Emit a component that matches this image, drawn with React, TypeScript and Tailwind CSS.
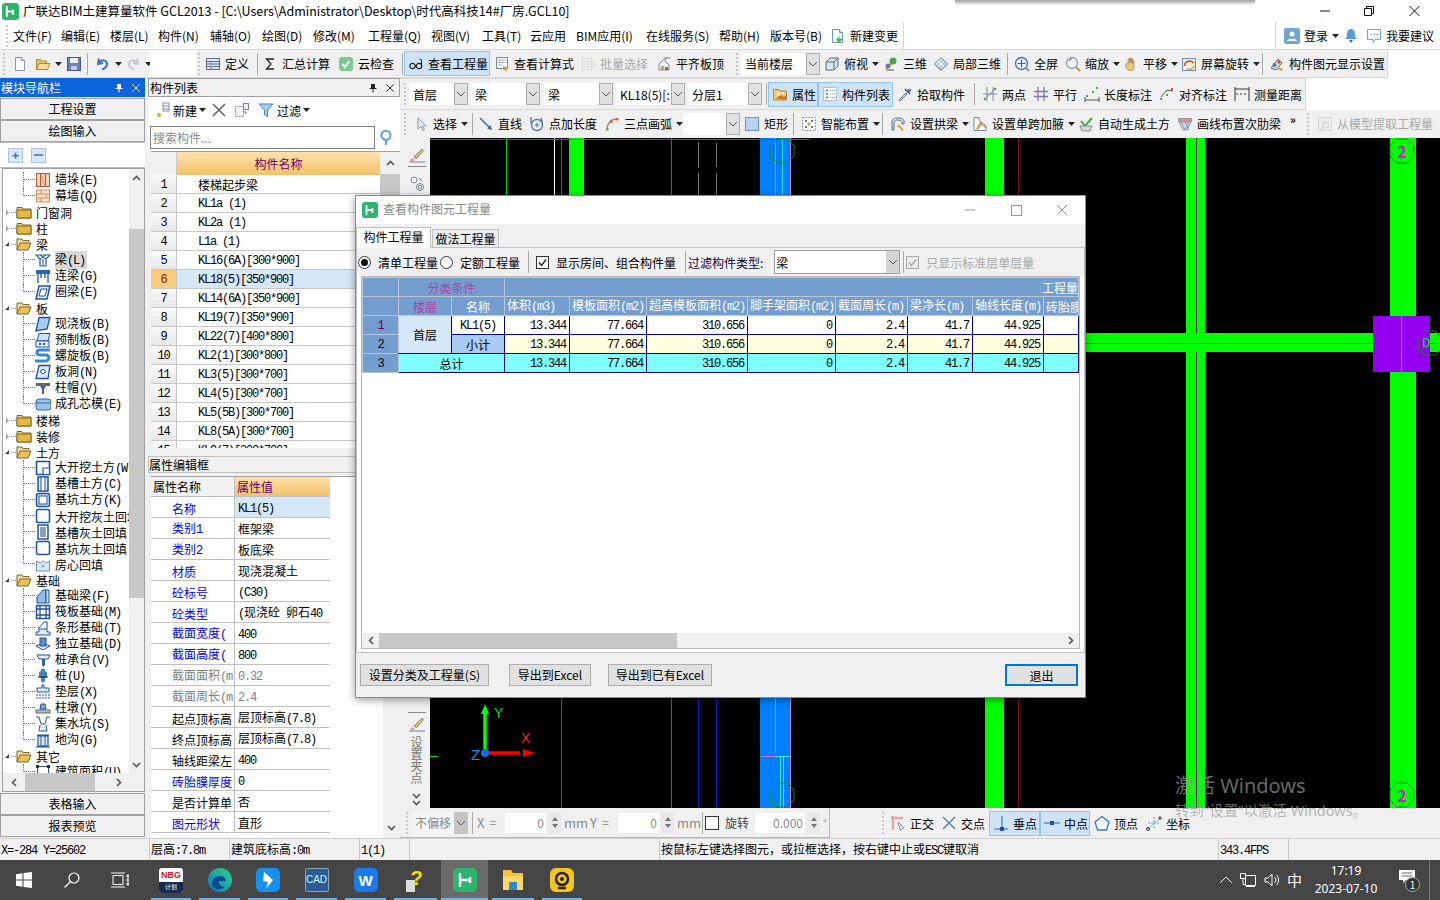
import type { ReactNode } from "react";
import clsx from "clsx";

const mono = "font-['Liberation_Mono',monospace] text-[12px] tracking-[-1.2px]";

// latin runs get narrow mono so they take half the width of a CJK char, like SimSun
function Sim({ t }: { t: string }) {
  const parts = t.split(/([ -~]+)/).filter(Boolean);
  return (
    <span>
      {parts.map((p, i) =>
        /^[ -~]+$/.test(p) ? (
          <span key={i} className={mono}>{p}</span>
        ) : (
          <span key={i}>{p}</span>
        )
      )}
    </span>
  );
}

const icons: Record<string, ReactNode> = {
  file: <><path d="M3.5 1.5h6l3 3v10h-9z" fill="#fff" stroke="#8a96a8" /><path d="M9.5 1.5v3h3" fill="#dfe4ee" stroke="#8a96a8" /></>,
  open: <><path d="M1.5 13.5v-10h4l1 1.500h5v2" fill="#e8c468" stroke="#a9853a" /><path d="M1.5 13.5l2.5-6h11l-2.5 6z" fill="#f7dd93" stroke="#a9853a" /></>,
  save: <><rect x="1.5" y="1.500" width="13" height="13" fill="#6d7fb5" stroke="#46568c" /><rect x="4" y="2" width="8" height="5" fill="#eef1f8" /><rect x="5" y="10" width="6" height="4" fill="#c3cbe0" /></>,
  undo: <path d="M4 2.500 3 8l5-1M3.500 7.500C6 3 12 3.500 12 8c0 3-2.500 4.500-5 5.500" fill="none" stroke="#3a76c8" strokeWidth="2" />,
  redo: <path d="M12 2.500 13 8l-5-1M12.500 7.500C10 3 4 3.500 4 8c0 3 2.500 4.500 5 5.500" fill="none" stroke="#c4c8cf" strokeWidth="2" />,
  define: <><rect x="1.500" y="2.500" width="13" height="11" fill="#dbe6f6" stroke="#5b6f90" /><path d="M1.500 5.500h13M6 5.500v8M2 8h3M2 10.500h3M7 8h7M7 10.500h7" stroke="#5b6f90" /></>,
  sigma: <path d="M12 3H4.500L9 8l-4.500 5H12" fill="none" stroke="#222" strokeWidth="1.300" />,
  cloud: <><rect x="1" y="1" width="14" height="14" rx="3" fill="#7ccb8d" /><path d="m4.500 8 2.500 3 4.500-6" fill="none" stroke="#fff" strokeWidth="2" /></>,
  glasses: <><circle cx="4.500" cy="10" r="2.700" fill="none" stroke="#222" strokeWidth="1.200" /><circle cx="11" cy="10" r="2.700" fill="none" stroke="#222" strokeWidth="1.200" /><path d="M7 9.500h1.500M13.500 9V4l-2-1" fill="none" stroke="#222" /></>,
  calc: <><rect x="2.500" y="1.500" width="11" height="11" fill="#fff" stroke="#7c8798" /><path d="M4.500 4h7M4.500 6.500h7M4.500 9h4" stroke="#6b88b4" strokeDasharray="2 1" /><path d="m9 10 5 2-2 1 1 2-1.500.5-1-2-1.500 1z" fill="#d89a2a" /></>,
  newchg: <><path d="M2.500 1.500h7l3 3v10h-10z" fill="#fff" stroke="#6a9ac8" /><path d="M9.500 1.500v3h3" fill="#d6e6f6" stroke="#6a9ac8" /><path d="M9 8v3M6.500 11h5L9 15z" fill="#4caf50" stroke="#4caf50" /></>,
  batch: <><rect x="2.500" y="2.500" width="9" height="11" fill="#f1f1f1" stroke="#c0c0c0" /><path d="M4 5h6M4 8h6M4 11h6M12 6l3 3-3 3" fill="none" stroke="#bcbcbc" /></>,
  align: <><path d="M3 14V8l6-6v3l4 4v5z" fill="#e9edf4" stroke="#7a8aa6" /><rect x="5" y="10" width="3" height="4" fill="#d8a13a" /><rect x="9" y="11" width="3" height="3" fill="#d84a2a" /><path d="M9 2h5" stroke="#777" /></>,
  topview: <><path d="M2 6l4-4h8v8l-4 4H2z" fill="#d9e7f7" stroke="#567" /><path d="M2 6h8v8M10 6l4-4" fill="none" stroke="#567" /></>,
  tree3d: <><path d="M3 13 8 8l4-5" stroke="#d0a030" strokeWidth="2" /><circle cx="10" cy="5" r="3.500" fill="#4ca34c" /><circle cx="5" cy="10" r="2.500" fill="#5a80b8" /><path d="M3 14h8" stroke="#888" strokeWidth="1.500" /></>,
  local3d: <><path d="M8 1.500 14.500 8 8 14.500 1.500 8z" fill="#bdd2ea" stroke="#5a7a9c" /><path d="m5 5 6 6M8 2.500 3 8M11 5l-5 5" stroke="#fff" /></>,
  zoomfull: <><circle cx="7.500" cy="7.500" r="6" fill="#e4ecf8" stroke="#4f6f9f" strokeWidth="1.300" /><path d="M7.500 3.500v8M3.500 7.500h8" stroke="#3a5a90" /><path d="m12 12 3 3" stroke="#8895ad" strokeWidth="2" /></>,
  zoom: <><circle cx="7" cy="7" r="5.500" fill="#eef3fb" stroke="#8a9ab5" strokeWidth="1.300" /><path d="m11 11 4 4" stroke="#b89a50" strokeWidth="2.200" /><path d="M4 5a3.500 3.500 0 0 1 3-2" stroke="#5a7ab0" fill="none" /></>,
  pan: <path d="M4 13c-2-3-2-5-1-5.500s2 1 2 1V3.500c0-1 1.500-1 1.500 0V7 2.500c0-1 1.500-1 1.500 0V7V3c0-1 1.500-1 1.500 0v5 -3c0-1 1.500-1 1.500 0v6c0 2-1 3-2 3.500H6z" fill="#e8c878" stroke="#96824f" strokeWidth=".7" />,
  rotate: <><rect x="1.500" y="2.500" width="13" height="12" fill="#f5f2d5" stroke="#6b8fc0" /><path d="M3.500 10a5 5 0 0 1 9-3" fill="none" stroke="#e0402a" strokeWidth="1.500" /><path d="M13 10a5 5 0 0 1-7 3" fill="none" stroke="#e0a02a" strokeWidth="1.500" /></>,
  display: <><path d="M2 12 9 3l4 4-6 7z" fill="#d9d6c2" stroke="#666" /><circle cx="5.500" cy="9" r="2" fill="#4a7fc0" /><path d="m9 11 5 2-1 2-5-2z" fill="#c9a24a" /><circle cx="10" cy="6" r="1.500" fill="#c04040" /></>,
  attr: <><path d="M1.500 14V3.500h5l1 1.500h7v9z" fill="#f2cd78" stroke="#aa8438" /><path d="M4 12.500 9 8l3 3 2-2v4.500z" fill="#c97920" /><path d="M5 7h7M5 9h4" stroke="#fff" /></>,
  list: <><rect x="1.500" y="1.500" width="13" height="13" fill="#fff" stroke="#93a9c6" strokeDasharray="2 1" /><path d="M4 4.500h2M4 8h2M4 11.500h2" stroke="#3c70b0" strokeWidth="1.500" /><path d="M8 4.500h5M8 8h5M8 11.500h5" stroke="#8aa" strokeDasharray="1 1" /></>,
  pick: <><path d="M9 7 3 13l-1 2 2-1 6-6z" fill="#dfeaf6" stroke="#5c7ba3" /><path d="m9 4 3 3 2-2c1-1-.5-3-2-2z" fill="#5a7faa" /><path d="m8 3 5 5" stroke="#39577f" strokeWidth="1.500" /></>,
  twopoint: <><path d="M5 1v14M11 1v14M1 8h14" stroke="#7f88b0" /><path d="M2 14 14 2" stroke="#d86a55" /><circle cx="3" cy="13" r="1.300" fill="#55a055" /><circle cx="13" cy="3" r="1.300" fill="#55a055" /></>,
  parallel: <path d="M5 1v14M11 1v14M1 5.500h14M1 10.500h14" stroke="#7f78a8" strokeWidth="1.300" />,
  lenmark: <><path d="M1 14h14M1 11v5M15 11v5" stroke="#555" /><rect x="12" y="1" width="2" height="2" fill="#52a552" /><rect x="8" y="5" width="2" height="2" fill="#52a552" /><rect x="2" y="9" width="2" height="2" fill="#52a552" /></>,
  alignmark: <><path d="m2 11 6-7 6 1" fill="none" stroke="#555" /><rect x="1" y="12" width="2" height="2" fill="#52a552" /><rect x="7" y="8" width="2" height="2" fill="#52a552" /><rect x="12" y="2" width="2" height="2" fill="#d25a3a" /></>,
  measure: <path d="M1 1v14M15 1v14M1 3h14M2 8h2M6 8h2M10 8h2" stroke="#333" fill="none" />,
  cursor: <path d="m5 2 0 11 3-2.500 2 4 1.500-.8-2-3.800H13z" fill="#e9eef6" stroke="#8a97ac" />,
  line: <><path d="m2 2 11 11" stroke="#3a6aa8" strokeWidth="1.500" /><path d="m14 14-5-1.500 3.500-3.500z" fill="#3a6aa8" /></>,
  addlen: <><circle cx="8" cy="9" r="5.500" fill="#eef3fa" stroke="#5474a4" strokeWidth="1.400" /><path d="M8 6.500v5M5.500 9h5" stroke="#5474a4" /><path d="M2 1v6M12 2l1 4" stroke="#5474a4" strokeWidth="1.400" /></>,
  arc: <><path d="M3 14C3 7 7 3 13 3" fill="none" stroke="#888" strokeWidth="1.300" /><rect x="2" y="12" width="2.500" height="2.500" fill="#5aa85a" /><rect x="6" y="4.500" width="2.500" height="2.500" fill="#d8603a" /><rect x="12" y="2" width="2.500" height="2.500" fill="#d8603a" /></>,
  rect: <rect x="1.500" y="1.500" width="13" height="13" fill="#b8d2f2" stroke="#6a8fc0" />,
  smart: <><rect x="1.500" y="1.500" width="13" height="13" fill="#fff" stroke="#808080" strokeDasharray="1.500 1.500" /><path d="M4 4h2v2H4zM10 4h2v2h-2zM4 10h2v2H4zM10 10h2v2h-2z" fill="#777" /><path d="M8 6v4M6 8h4" stroke="#b08a3a" /></>,
  arch: <><path d="M2 14V5c0-2 3-3 6-3s6 1 6 3v3h-2V6c0-1-2-2-4-2S4 5 4 6v8z" fill="#dbe8f5" stroke="#4f6f96" /><path d="m9 8 5 6-2 1-5-5z" fill="#d8a84a" /></>,
  haunch: <><path d="M2 1.500v13h12V10L7 4V1.500z" fill="#fff" stroke="#6f88a8" /><path d="m4 13 4-7 2 2-4 6z" fill="#d8a03a" /><path d="m8 6 6 6" stroke="#d86a3a" /></>,
  auto: <><path d="m3 5 4 5 7-8" fill="none" stroke="#44aa44" strokeWidth="2" /><path d="M2 10h12l-2 5H4z" fill="#d9d9d9" stroke="#888" /></>,
  rib: <><rect x="1.500" y="2.500" width="13" height="3" fill="#e88f78" stroke="#8d9ab0" /><path d="m2 6 4 8h4l4-8z" fill="#cfdcee" stroke="#8d9ab0" /><path d="M4 6l4 8M8 6l4 8M12 6l-4 8" stroke="#8d9ab0" /></>,
  extract: <><rect x="1.500" y="1.500" width="13" height="13" fill="#e9e9e9" stroke="#c0c0c0" /><circle cx="9" cy="9" r="3" fill="none" stroke="#b8b8b8" /><path d="m7 11-3 3" stroke="#b8b8b8" strokeWidth="1.500" /></>,
  ortho: <><path d="M3 1v14M1 3h12" stroke="#e0a8a8" strokeWidth="2.500" /><path d="m8 7 6 6-2 .5-1.500 2z" fill="#eef3f8" stroke="#7a8ea8" /></>,
  cross: <path d="m2 2 12 12M14 2 2 14" stroke="#4a7ab8" strokeWidth="1.300" />,
  perp: <><path d="M9 1v13M1 14h14" stroke="#2f5f9f" /><rect x="7" y="12" width="4" height="4" fill="#22509a" /></>,
  mid: <><path d="M0 8h16" stroke="#2f5f9f" /><rect x="6" y="6" width="4" height="4" fill="#22509a" /></>,
  vertex: <path d="M8 1.500 15 7l-2.500 8h-9L1 7z" fill="#eef5ff" stroke="#3a76c0" strokeWidth="1.300" />,
  coord: <><path d="M2 14 8 8l6-4M2 8h12M8 2v12" stroke="#6aa0d0" strokeDasharray="2 1" fill="none" /><circle cx="2" cy="14" r="1.500" fill="none" stroke="#333" /><circle cx="14" cy="3" r="1.200" fill="none" stroke="#333" /></>,
  folder: <><path d="M1 14V3.500h5l1 1.500h8v9z" fill="#f4d67f" stroke="#7a6630" /><path d="M1 6h14v8H1z" fill="#e8b93f" stroke="#7a6630" /></>,
  folderopen: <><path d="M1 14V3h5l1 1.500h6V6" fill="#f2dd9f" stroke="#7a6630" /><path d="M1 14 4 7h11l-3 7z" fill="#edc355" stroke="#7a6630" /></>,
  pier: <><rect x="1.500" y="1.500" width="13" height="13" fill="#f6d9b4" stroke="#b5562e" /><path d="M5.500 1.500v13M10.500 1.500v13" stroke="#b5562e" /><path d="M6 2l4 12" stroke="#e88" /></>,
  curtain: <><rect x="1.500" y="2" width="13" height="12" fill="#fbe3cc" stroke="#d88a5a" /><path d="M1.500 6h13M1.500 10h13M6 2v4M11 6v4M6 10v4" stroke="#d88a5a" /></>,
  beam: <><path d="M1 3h14l-4 4v7H5V7z" fill="#e8f0fb" stroke="#2a5fa8" strokeWidth="1.200" /><path d="M5 3l6 4M11 3 5 7M8 7v7" stroke="#2a5fa8" /></>,
  linkbeam: <><path d="M1 2h14v4H1z" fill="#2a64b4" /><path d="M3 6v9M13 6v9M6 6v4M10 6v4" stroke="#2a64b4" strokeWidth="1.400" /></>,
  ringbeam: <><path d="M4 2h11l-3 13H1z" fill="#e6eefb" stroke="#1f52a0" strokeWidth="1.500" /><path d="M6 5h6l-2 7H4z" fill="#fff" stroke="#1f52a0" /></>,
  slab: <path d="M4 1.500h11L12 13 1 15z" fill="#a7cdf2" stroke="#1f52a0" strokeWidth="1.300" />,
  precast: <><path d="M4 1.500h11L13 9H2z" fill="#cfe2f6" stroke="#1f52a0" /><rect x="1" y="9" width="13" height="6" fill="#eef5ff" stroke="#1f52a0" /><rect x="4" y="11" width="2" height="2" fill="#1f52a0" /><rect x="8" y="11" width="2" height="2" fill="#1f52a0" /></>,
  spiral: <path d="M15 2H5C1 2 1 7 5 7h6c4 0 4 6-1 6H0" fill="none" stroke="#3888e0" strokeWidth="3" />,
  hole: <><path d="M4 1.500h11l-2 13H1z" fill="#dce9f8" stroke="#1f52a0" strokeWidth="1.300" /><ellipse cx="8" cy="7.500" rx="2.500" ry="2" fill="#fff" stroke="#1f52a0" /></>,
  capital: <><rect x="1" y="3" width="14" height="3" fill="#666" /><path d="M5 6h6l-2 3v5H7V9z" fill="#3a64a8" /></>,
  core: <><rect x="1" y="3" width="15" height="11" rx="3" fill="#9dc3e6" stroke="#2a64b4" /><path d="M1 7h15" stroke="#2a64b4" /></>,
  pitframe: <><rect x="1.500" y="1.500" width="13" height="13" fill="#fff" stroke="#1f52a0" strokeWidth="1.600" /><path d="M8 8h6.500v6.500H8z" fill="#fff" stroke="#1f52a0" strokeWidth="1.200" /></>,
  trench: <><rect x="3" y="1" width="10" height="14" fill="#dfeaf8" stroke="#1f52a0" strokeWidth="1.500" /><rect x="6" y="1" width="4" height="14" fill="#fff" stroke="#1f52a0" /></>,
  pit: <><rect x="1.500" y="1.500" width="13" height="13" rx="2" fill="#cfe3f9" stroke="#1f52a0" strokeWidth="1.500" /><rect x="4" y="4" width="8" height="8" fill="#fff" stroke="#1f52a0" /></>,
  pitsoft: <rect x="1.500" y="1.500" width="13" height="13" rx="2" fill="#fff" stroke="#1f52a0" strokeWidth="1.500" />,
  trenchsoft: <><rect x="3" y="1" width="10" height="14" fill="#fff" stroke="#1f52a0" strokeWidth="1.500" /><rect x="5" y="3" width="6" height="10" fill="#8e9fb5" /></>,
  fill: <><path d="M1.500 5v10h13V5l-3 2-3-2-3 2z" fill="#dce9f8" stroke="#6a8ebd" /><circle cx="8" cy="10" r="1.500" fill="#8aa9cc" /></>,
  fbeam: <><path d="M2 15V9l6-7h3v13z" fill="#8fbde8" stroke="#1f52a0" /><path d="M11 2h3v13h-3z" fill="#cfe3f9" stroke="#1f52a0" /></>,
  raft: <><rect x="1.500" y="1.500" width="13" height="13" fill="#fff" stroke="#1f52a0" strokeWidth="1.500" /><path d="M1.500 5h13M1.500 11h13M5 1.500v13M11 1.500v13" stroke="#1f52a0" strokeWidth="1.300" /></>,
  strip: <><path d="M3 9 9 2h3v7" fill="#fff" stroke="#1f52a0" /><path d="M1 15h14v-3h-3V9H4v3H1z" fill="#e6eefb" stroke="#1f52a0" /></>,
  isol: <><path d="M1 10 8 7l7 3-7 4z" fill="#e6eefb" stroke="#1f52a0" /><rect x="5" y="2" width="6" height="8" fill="#5a8ac8" stroke="#1f52a0" /></>,
  cap: <><path d="M2 3h13l-2 4H4z" fill="#e6eefb" stroke="#1f52a0" /><path d="M7 7h3v6l-1.500 2L7 13z" fill="#2a64b4" /></>,
  pile: <><path d="M6 1h4v2l2 1v5l-2 1v3l-2 2-2-2v-3L4 9V4l2-1z" fill="#4a7cc0" /><path d="M3 9h10" stroke="#222" /></>,
  cushion: <><path d="M7 1h2v3h5v4H2V4h5z" fill="#dce9f8" stroke="#1f52a0" /><path d="M1 11h14M1 14h14" stroke="#1f52a0" strokeDasharray="2 1" /></>,
  pedestal: <><path d="M6 4h4l1 5H5z" fill="#7ea7dc" stroke="#1f52a0" /><rect x="1" y="10" width="14" height="3" fill="#bdbdbd" stroke="#666" /></>,
  sump: <><path d="M1 1h3l2 7h4l2-7h3M5 9l-1 6h8l-1-6" fill="none" stroke="#1f52a0" /><path d="M5 11h6M4 14h8" stroke="#7aa9e0" strokeDasharray="1 1" /></>,
  ditch: <><path d="M3 4h10v10H3zM1 15h14M2 3h12" fill="#e6eefb" stroke="#1f52a0" strokeWidth="1.200" /><path d="M6 4v10M10 4v10" stroke="#1f52a0" /></>,
  area: <><rect x="2.500" y="2.500" width="11" height="11" fill="#fff" stroke="#1f52a0" /><path d="M1 1h3v3H1zM12 1h3v3h-3zM1 12h3v3H1zM12 12h3v3h-3z" fill="#333" /></>,
  newitem: <><path d="M9 4h6M9 7h6M5 11v4M3 13h4" stroke="#7f8fa8" /><path d="M3 13h4M5 11v4" stroke="#e0b030" strokeWidth="2.500" /><path d="M9 1h6v8H9z" fill="none" stroke="#8090a8" /></>,
  copyto: <><rect x="1.500" y="4.500" width="8" height="10" fill="#f2f2f2" stroke="#9a9a9a" strokeDasharray="2 1" /><rect x="9.500" y="1.500" width="5" height="6" fill="#e8eef8" stroke="#6f88a8" /><path d="m9 10 3 0 0 2" stroke="#5a80c0" fill="none" /></>,
  filter: <path d="M1 2h14L9.500 8v6.500l-3-2V8z" fill="#a5d0f5" stroke="#3a80c8" />,
  brush: <><path d="m5 10 8-8 1.500 1.500-7 8z" fill="#d9c26a" stroke="#888" /><path d="m3 11 3 2-2 1H1z" fill="#e88ca8" /><path d="M0 15h16" stroke="#6a7f9a" /></>,
  grips: <><circle cx="5" cy="4" r="3" fill="none" stroke="#7a88a0" /><circle cx="11" cy="11" r="3.500" fill="none" stroke="#7a88a0" /><circle cx="11" cy="11" r="1.800" fill="none" stroke="#7a88a0" /><path d="m10 2 3 3" stroke="#4a70a8" /></>,
};

function Icon({ n, off }: { n: string; off?: boolean }) {
  return (
    <svg viewBox="0 0 16 16" className={clsx("h-4 w-4 shrink-0", off && "opacity-50")}>
      {icons[n]}
    </svg>
  );
}

function Caret() {
  return (
    <svg viewBox="0 0 7 4" className="h-1 w-[7px] shrink-0">
      <path d="M0 0h7L3.500 4z" fill="#222" />
    </svg>
  );
}

function ChevDown() {
  return (
    <svg viewBox="0 0 10 6" className="h-[6px] w-[10px]">
      <path d="m1 1 4 4 4-4" fill="none" stroke="#555" />
    </svg>
  );
}

function Tool({ w, i, label, caret, on, off }: { w: string; i: string; label?: string; caret?: boolean; on?: boolean; off?: boolean }) {
  return (
    <div
      className={clsx(
        "flex h-[25px] shrink-0 items-center gap-1 whitespace-nowrap pl-1",
        w,
        on && "bg-[#cfe3f7] shadow-[inset_0_0_0_1px_#90c5f0]",
        off && "text-[#a8a8a8]"
      )}
    >
      <Icon n={i} off={off} />
      {label && <span>{label}</span>}
      {caret && <Caret />}
    </div>
  );
}

function Sep({ w }: { w: string }) {
  return (
    <div className={clsx("flex h-[22px] shrink-0 items-center justify-center", w)}>
      <div className="h-full w-px bg-[#a8a8a8]" />
    </div>
  );
}

function Grip({ w }: { w: string }) {
  return (
    <div className={clsx("flex h-[22px] shrink-0 items-center justify-center", w)}>
      <div className="h-full border-l-2 border-dotted border-[#c8c8c8]" />
    </div>
  );
}

function Combo({ w, text, off, inner = "w-full" }: { w: string; text?: string; off?: boolean; inner?: string }) {
  return (
    <div className={clsx("flex h-[22px] shrink-0 items-center", w)}>
      <div className={clsx("flex h-full items-center justify-between bg-white", inner)}>
        <span className={clsx("overflow-hidden whitespace-nowrap pl-1", off && "text-[#9a9a9a]")}>{text}</span>
        <span className="flex h-full w-[14px] shrink-0 items-center justify-center border border-[#adadad] bg-[#e1e1e1]">
          <ChevDown />
        </span>
      </div>
    </div>
  );
}

function TitleBar() {
  return (
    <div className="relative flex h-[22px] shrink-0 items-center bg-white">
      <div className="absolute left-[955px] top-0 h-[2px] w-[300px] bg-[#b0b0b0] shadow-[0_1px_3px_#999]" />
      <svg viewBox="0 0 16 16" className="ml-[2px] h-[17px] w-[17px]">
        <rect width="16" height="16" rx="3" fill="#2db66b" />
        <path d="M4.500 3v10M5 8h5.500M10.500 6v5" stroke="#fff" strokeWidth="1.800" fill="none" />
      </svg>
      <span className="ml-[4px] whitespace-nowrap pb-[2px] text-[12.500px]">
        广联达BIM土建算量软件 GCL2013 - [C:\Users\Administrator\Desktop\时代高科技14#厂房.GCL10]
      </span>
      <div className="ml-auto flex items-center">
        <svg viewBox="0 0 45 22" className="h-[22px] w-[45px]"><path d="M18 11h10" stroke="#111" /></svg>
        <svg viewBox="0 0 45 22" className="h-[22px] w-[45px]"><path d="M17.500 8.500h7v7h-7zM19.500 8.500v-2h7v7h-2" fill="none" stroke="#111" /></svg>
        <svg viewBox="0 0 45 22" className="h-[22px] w-[48px]"><path d="m16 6 10 10m0-10L16 16" stroke="#111" /></svg>
      </div>
    </div>
  );
}

const menus: [string, string][] = [
  ["文件(F)", "w-[48px]"], ["编辑(E)", "w-[49px]"], ["楼层(L)", "w-[48px]"], ["构件(N)", "w-[52px]"],
  ["辅轴(O)", "w-[52px]"], ["绘图(D)", "w-[51px]"], ["修改(M)", "w-[55px]"], ["工程量(Q)", "w-[63px]"],
  ["视图(V)", "w-[51px]"], ["工具(T)", "w-[48px]"], ["云应用", "w-[46px]"], ["BIM应用(I)", "w-[70px]"],
  ["在线服务(S)", "w-[73px]"], ["帮助(H)", "w-[51px]"], ["版本号(B)", "w-[60px]"],
];

function MenuBar() {
  return (
    <div className="flex h-[28px] shrink-0 items-center border-b border-[#d8d8d8] bg-white">
      <Grip w="w-[13px]" />
      {menus.map(([t, w]) => (
        <span key={t} className={clsx("shrink-0 whitespace-nowrap", w)}>{t}</span>
      ))}
      <div className="flex h-full w-[74px] shrink-0 items-center gap-1 border-r border-[#d8d8d8]">
        <Icon n="newchg" />
        <span>新建变更</span>
      </div>
      <div className="ml-auto flex h-full items-center border-l border-[#d8d8d8] pl-[8px]">
        <svg viewBox="0 0 16 16" className="h-4 w-4"><rect width="16" height="16" rx="2" fill="#6ea6d8" /><circle cx="8" cy="6" r="2.500" fill="#fff" /><path d="M3 13c1-3 9-3 10 0z" fill="#fff" /></svg>
        <span className="ml-1">登录</span>
        <span className="ml-1"><Caret /></span>
        <svg viewBox="0 0 16 16" className="ml-[4px] h-4 w-4"><path d="M8 1c-3 0-4 3-4 6 0 2-1 3-2 4h12c-1-1-2-2-2-4 0-3-1-6-4-6z" fill="#5a9ae0" /><path d="M6 12h4l-2 3z" fill="#3a70b0" /></svg>
        <svg viewBox="0 0 16 16" className="ml-[7px] h-4 w-4"><path d="M1.500 1.500h13v10H9l-2 3v-3H1.500z" fill="#fff" stroke="#6ea6d8" /><path d="M5 6.500h1M8 6.500h1M11 6.500h1" stroke="#4a7ab0" /></svg>
        <span className="ml-1 mr-[6px]">我要建议</span>
      </div>
    </div>
  );
}

function Toolbar1() {
  return (
    <div className="flex h-[28px] shrink-0 items-center bg-white">
      <div className="flex h-full w-[1388px] shrink-0 items-center border-b border-r border-[#d8d8d8] bg-[#f0f0f0]">
        <Grip w="w-[8px]" />
        <Tool w="w-[23px]" i="file" />
        <Tool w="w-[31px]" i="open" caret />
        <Tool w="w-[21px]" i="save" />
        <Sep w="w-[8px]" />
        <Tool w="w-[30px]" i="undo" caret />
        <Tool w="w-[29px]" i="redo" caret />
        <div className="h-full w-[46px] shrink-0 bg-white" />
        <Grip w="w-[5px]" />
        <Tool w="w-[55px]" i="define" label="定义" />
        <Sep w="w-[2px]" />
        <Tool w="w-[76px]" i="sigma" label="汇总计算" />
        <Tool w="w-[66px]" i="cloud" label="云检查" />
        <Sep w="w-[4px]" />
        <Tool w="w-[86px]" i="glasses" label="查看工程量" on />
        <Tool w="w-[86px]" i="calc" label="查看计算式" />
        <Tool w="w-[76px]" i="batch" label="批量选择" off />
        <Tool w="w-[80px]" i="align" label="平齐板顶" />
        <Grip w="w-[9px]" />
        <Combo w="w-[79px]" text="当前楼层" />
        <Tool w="w-[59px]" i="topview" label="俯视" caret />
        <Tool w="w-[50px]" i="tree3d" label="三维" />
        <Tool w="w-[76px]" i="local3d" label="局部三维" />
        <Sep w="w-[5px]" />
        <Tool w="w-[51px]" i="zoomfull" label="全屏" />
        <Tool w="w-[58px]" i="zoom" label="缩放" caret />
        <Tool w="w-[58px]" i="pan" label="平移" caret />
        <Tool w="w-[82px]" i="rotate" label="屏幕旋转" caret />
        <Sep w="w-[6px]" />
        <Tool w="w-[122px]" i="display" label="构件图元显示设置" />
      </div>
    </div>
  );
}

const treeRows: { t: string; i?: string; open?: boolean; last?: boolean }[] = [
  { t: "墙垛(E)", i: "pier" }, { t: "幕墙(Q)", i: "curtain", last: true },
  { t: "门窗洞" }, { t: "柱" }, { t: "梁", open: true },
  { t: "梁(L)", i: "beam" }, { t: "连梁(G)", i: "linkbeam" }, { t: "圈梁(E)", i: "ringbeam", last: true },
  { t: "板", open: true },
  { t: "现浇板(B)", i: "slab" }, { t: "预制板(B)", i: "precast" }, { t: "螺旋板(B)", i: "spiral" },
  { t: "板洞(N)", i: "hole" }, { t: "柱帽(V)", i: "capital" }, { t: "成孔芯模(E)", i: "core", last: true },
  { t: "楼梯" }, { t: "装修" }, { t: "土方", open: true },
  { t: "大开挖土方(W)", i: "pitframe" }, { t: "基槽土方(C)", i: "trench" }, { t: "基坑土方(K)", i: "pit" },
  { t: "大开挖灰土回填", i: "pitsoft" }, { t: "基槽灰土回填", i: "trenchsoft" }, { t: "基坑灰土回填", i: "pitsoft" },
  { t: "房心回填", i: "fill", last: true },
  { t: "基础", open: true },
  { t: "基础梁(F)", i: "fbeam" }, { t: "筏板基础(M)", i: "raft" }, { t: "条形基础(T)", i: "strip" },
  { t: "独立基础(D)", i: "isol" }, { t: "桩承台(V)", i: "cap" }, { t: "桩(U)", i: "pile" },
  { t: "垫层(X)", i: "cushion" }, { t: "柱墩(Y)", i: "pedestal" }, { t: "集水坑(S)", i: "sump" },
  { t: "地沟(G)", i: "ditch", last: true },
  { t: "其它", open: true },
  { t: "建筑面积(U)", i: "area" },
];

function TreeRow({ row }: { row: (typeof treeRows)[number] }) {
  if (row.i) {
    return (
      <div className="flex h-4 items-center whitespace-pre">
        <span className={clsx("ml-[20px] shrink-0", row.last ? "h-[8px] w-[12px] self-start border-b border-l border-dotted border-[#777]" : "flex h-4 w-[12px] border-l border-dotted border-[#777]")}>
          {!row.last && <span className="h-[8px] w-full border-b border-dotted border-[#777]" />}
        </span>
        <Icon n={row.i} />
        <span className={clsx("ml-[4px] pr-[2px]", row.t === "梁(L)" && "bg-[#d8d8d8]")}>
          <Sim t={row.t} />
        </span>
      </div>
    );
  }
  return (
    <div className="flex h-4 items-center whitespace-pre">
      <svg viewBox="0 0 5 7" className="ml-[2px] h-[7px] w-[5px] shrink-0">
        {row.open ? <path d="M0 5 4 1v4z" fill="#444" /> : <path d="m1 0 3 3.500-3 3.500z" fill="#a8a8a8" />}
      </svg>
      <span className="ml-[1px] w-[5px] shrink-0 border-b border-dotted border-[#999]" />
      <Icon n={row.open ? "folderopen" : "folder"} />
      <span className="ml-[4px]">{row.t}</span>
    </div>
  );
}

function ChevV({ up }: { up?: boolean }) {
  return (
    <svg viewBox="0 0 9 6" className="h-[6px] w-[9px]">
      <path d={up ? "m1 5 3.500-3.500L8 5" : "m1 1 3.500 3.500L8 1"} fill="none" stroke="#555" strokeWidth="1.600" />
    </svg>
  );
}

function ChevH({ right }: { right?: boolean }) {
  return (
    <svg viewBox="0 0 6 9" className="h-[9px] w-[6px]">
      <path d={right ? "m1 1 3.500 3.500L1 8" : "M5 1 1.500 4.500 5 8"} fill="none" stroke="#555" strokeWidth="1.600" />
    </svg>
  );
}

function PanelHead({ title, blue }: { title: string; blue?: boolean }) {
  return (
    <div className={clsx("flex h-[19px] shrink-0 items-center justify-between pr-[5px]", blue ? "bg-[#0a64dc] text-white" : "border border-[#a0a0a0] bg-[#f0f0f0]")}>
      <span className="pl-[1px]">{title}</span>
      <div className="flex items-center gap-[9px]">
        <svg viewBox="0 0 8 10" className="h-[10px] w-[8px]"><path d="M2 1h4v4h1.500v1h-3v3.500h-1V6h-3V5H2z" fill={blue ? "#fff" : "#222"} /></svg>
        <svg viewBox="0 0 8 8" className="h-2 w-2"><path d="m.5.500 7 7m0-7-7 7" stroke={blue ? "#fff" : "#333"} /></svg>
      </div>
    </div>
  );
}

function NavButton({ t }: { t: string }) {
  return <div className="flex h-[22px] shrink-0 items-center justify-center border border-[#a0a0a0] bg-[#f0f0f0] pb-[2px]">{t}</div>;
}

function LeftNav() {
  return (
    <div className="flex w-[148px] shrink-0 flex-col bg-[#f0f0f0] pr-[3px]">
      <PanelHead title="模块导航栏" blue />
      <div className="mt-[1px] flex flex-col">
        <NavButton t="工程设置" />
        <NavButton t="绘图输入" />
      </div>
      <div className="flex h-[26px] shrink-0 items-center gap-[8px] border-y border-[#c0c0c0] bg-white pl-[8px]">
        <span className="flex h-[15px] w-[15px] items-center justify-center border border-[#a8c4ea] bg-[#dbe7f8] font-bold leading-none text-[#2a70c8]">+</span>
        <span className="flex h-[15px] w-[15px] items-center justify-center border border-[#a8c4ea] bg-[#dbe7f8]"><span className="h-[2px] w-[9px] bg-[#5a8ac8]" /></span>
      </div>
      <div className="ml-[2px] flex min-h-0 flex-1 flex-col border border-[#a0a0a0] bg-white">
        <div className="flex min-h-0 flex-1">
          <div className="min-w-0 flex-1 overflow-hidden pt-[3px]">
            {treeRows.map((r) => (
              <TreeRow key={r.t + (r.i ?? "")} row={r} />
            ))}
          </div>
          <div className="flex w-[15px] shrink-0 flex-col items-center bg-[#f0f0f0]">
            <div className="flex h-[18px] items-center"><ChevV up /></div>
            <div className="mt-[42px] h-[369px] w-full bg-[#c8c8c8]" />
            <div className="mt-auto flex h-[17px] items-center"><ChevV /></div>
          </div>
        </div>
        <div className="flex h-[18px] shrink-0 items-center bg-[#f0f0f0]">
          <span className="flex w-[22px] justify-center"><ChevH /></span>
          <span className="h-full w-[70px] bg-[#c8c8c8]" />
          <span className="ml-[16px] flex w-[15px] justify-center"><ChevH right /></span>
        </div>
      </div>
      <div className="mt-[1px] flex flex-col pb-[1px]">
        <NavButton t="表格输入" />
        <NavButton t="报表预览" />
      </div>
    </div>
  );
}

const comps = [
  "楼梯起步梁", "KL1a (1)", "KL2a (1)", "L1a (1)", "KL16(6A)[300*900]", "KL18(5)[350*900]", "KL14(6A)[350*900]",
  "KL19(7)[350*900]", "KL22(7)[400*800]", "KL2(1)[300*800]", "KL3(5)[300*700]", "KL4(5)[300*700]",
  "KL5(5B)[300*700]", "KL8(5A)[300*700]", "KL9(7)[300*700]",
];

const props: { k: string; v: string; c?: "b" | "g" }[] = [
  { k: "名称", v: "KL1(5)", c: "b" }, { k: "类别1", v: "框架梁", c: "b" }, { k: "类别2", v: "板底梁", c: "b" },
  { k: "材质", v: "现浇混凝土", c: "b" }, { k: "砼标号", v: "(C30)", c: "b" }, { k: "砼类型", v: "(现浇砼 卵石40", c: "b" },
  { k: "截面宽度(", v: "400", c: "b" }, { k: "截面高度(", v: "800", c: "b" },
  { k: "截面面积(m", v: "0.32", c: "g" }, { k: "截面周长(m", v: "2.4", c: "g" },
  { k: "起点顶标高", v: "层顶标高(7.8)" }, { k: "终点顶标高", v: "层顶标高(7.8)" }, { k: "轴线距梁左", v: "400" },
  { k: "砖胎膜厚度", v: "0", c: "b" }, { k: "是否计算单", v: "否" }, { k: "图元形状", v: "直形", c: "b" },
];

function CompPanel() {
  return (
    <div className="flex w-[252px] shrink-0 flex-col bg-[#f0f0f0]">
      <PanelHead title="构件列表" />
      <div className="flex h-[26px] shrink-0 items-center bg-white pl-[6px]">
        <Icon n="newitem" />
        <span className="ml-[3px]">新建</span>
        <span className="ml-[2px]"><Caret /></span>
        <svg viewBox="0 0 14 14" className="ml-[6px] h-[14px] w-[14px]"><path d="m1 1 12 12m0-12L1 13" stroke="#666" strokeWidth="1.600" /></svg>
        <span className="ml-[8px]"><Icon n="copyto" /></span>
        <span className="ml-[8px]"><Icon n="filter" /></span>
        <span className="ml-[3px]">过滤</span>
        <span className="ml-[2px]"><Caret /></span>
      </div>
      <div className="flex h-[28px] shrink-0 items-center bg-white">
        <div className="ml-[2px] flex h-[23px] w-[225px] items-center border border-[#808080] bg-white pl-[2px] text-[#8a8a8a]">搜索构件...</div>
        <svg viewBox="0 0 14 14" className="ml-[3px] h-4 w-4"><circle cx="7" cy="5.500" r="4" fill="#fff" stroke="#5fa2e0" strokeWidth="1.800" /><path d="M7 9.500V14" stroke="#5fa2e0" strokeWidth="2" /></svg>
      </div>
      <div className="ml-[3px] flex h-[297px] shrink-0 border-t border-[#a0a0a0] bg-white">
        <div className="w-[229px] shrink-0 overflow-hidden">
          <div className="flex h-[23px]">
            <div className="w-[26px] border-r border-[#c8c8c8] bg-[#f2f2f2]" />
            <div className="flex flex-1 items-center justify-center bg-gradient-to-b from-[#fde1ac] to-[#f3c265] text-[#660066]">构件名称</div>
          </div>
          {comps.map((c, i) => (
            <div key={c} className="flex h-[19px] border-b border-[#c8c8c8]">
              <div className={clsx("flex w-[26px] shrink-0 items-center justify-center border-r border-[#c8c8c8] whitespace-pre", i === 5 ? "bg-[#fbca7d] text-[#7a1f00]" : "bg-gradient-to-b from-[#fafafa] to-[#e8e8e8]")}>
                <Sim t={String(i + 1)} />
              </div>
              <div className={clsx("flex flex-1 items-center whitespace-pre pl-[21px]", i === 5 && "bg-[#d5e8f8]")}>
                <Sim t={c} />
              </div>
            </div>
          ))}
        </div>
        <div className="flex flex-1 flex-col items-center bg-[#f0f0f0]">
          <div className="flex h-[22px] items-center"><ChevV up /></div>
          <div className="h-[60px] w-full bg-[#c8c8c8]" />
        </div>
      </div>
      <div className="mt-[8px] shrink-0 border border-[#c0c0c0] bg-[#f0f0f0] pl-0 leading-[15px]">属性编辑框</div>
      <div className="ml-[3px] mt-[3px] flex min-h-0 flex-1 border-t border-[#a0a0a0] bg-white">
        <div className="w-[179px] shrink-0 overflow-hidden">
          <div className="flex h-[20px] border-b border-[#c0c0c0]">
            <div className="flex w-[84px] items-center border-r border-[#c0c0c0] bg-[#f2f2f2] pl-[2px]">属性名称</div>
            <div className="flex flex-1 items-center bg-gradient-to-b from-[#fde1ac] to-[#f3c265] pl-[2px] text-[#660066]">属性值</div>
          </div>
          {props.map((p, i) => (
            <div key={p.k} className="flex h-[21px] border-b border-[#c0c0c0]">
              <div className={clsx("flex w-[84px] shrink-0 items-center overflow-hidden whitespace-pre border-r border-[#c0c0c0] pl-[21px] pt-[2px]", p.c === "b" && "text-[#0000ee]", p.c === "g" && "text-[#808080]")}>
                <Sim t={p.k} />
              </div>
              <div className={clsx("flex flex-1 items-center whitespace-pre pl-[3px] pt-[1px]", i === 0 && "bg-[#d5e8f8]", p.c === "g" && "text-[#808080]")}>
                <Sim t={p.v} />
              </div>
            </div>
          ))}
        </div>
        <div className="flex-1" />
        <div className="flex w-[17px] shrink-0 flex-col items-center justify-end bg-[#f0f0f0] pb-[7px]"><ChevV /></div>
      </div>
    </div>
  );
}

function SmallRow({ children, h }: { children: ReactNode; h: string }) {
  return <div className={clsx("flex shrink-0 items-center overflow-hidden", h)}>{children}</div>;
}

function Toolbars() {
  return (
    <>
      <SmallRow h="h-[32px] bg-white">
        <div className="flex h-full w-[906px] shrink-0 items-center border-y border-r border-[#d8d8d8] bg-[#f0f0f0]">
          <Grip w="w-[9px]" />
          <Combo w="w-[62px]" text="首层" inner="w-[59px]" />
          <Combo w="w-[73px]" text="梁" inner="w-[69px]" />
          <Combo w="w-[72px]" text="梁" inner="w-[69px]" />
          <Combo w="w-[72px]" text="KL18(5)[:" inner="w-[69px]" />
          <Combo w="w-[76px]" text="分层1" inner="w-[74px]" />
          <Sep w="w-[4px]" />
          <Tool w="w-[50px]" i="attr" label="属性" on />
          <Tool w="w-[75px]" i="list" label="构件列表" on />
          <Tool w="w-[77px]" i="pick" label="拾取构件" />
          <Sep w="w-[8px]" />
          <Tool w="w-[51px]" i="twopoint" label="两点" />
          <Tool w="w-[51px]" i="parallel" label="平行" />
          <Tool w="w-[75px]" i="lenmark" label="长度标注" />
          <Tool w="w-[75px]" i="alignmark" label="对齐标注" />
          <Tool w="w-[75px]" i="measure" label="测量距离" />
        </div>
      </SmallRow>
      <SmallRow h="h-[28px] bg-[#f0f0f0] pb-[1px]">
        <Grip w="w-[9px]" />
        <Tool w="w-[62px]" i="cursor" label="选择" caret />
        <Sep w="w-[3px]" />
        <Tool w="w-[51px]" i="line" label="直线" />
        <Tool w="w-[75px]" i="addlen" label="点加长度" />
        <Tool w="w-[83px]" i="arc" label="三点画弧" caret />
        <Combo w="w-[57px]" />
        <Tool w="w-[49px]" i="rect" label="矩形" />
        <Sep w="w-[8px]" />
        <Tool w="w-[81px]" i="smart" label="智能布置" caret />
        <Sep w="w-[8px]" />
        <Tool w="w-[82px]" i="arch" label="设置拱梁" caret />
        <Tool w="w-[106px]" i="haunch" label="设置单跨加腋" caret />
        <Tool w="w-[99px]" i="auto" label="自动生成土方" />
        <Tool w="w-[117px]" i="rib" label="画线布置次肋梁" />
        <span className="w-[13px] shrink-0 pb-[8px] text-[11px] font-bold">»</span>
        <Grip w="w-[10px]" />
        <Tool w="w-[125px]" i="extract" label="从模型提取工程量" off />
      </SmallRow>
    </>
  );
}

// items on the drawing: x/y are the drawing's own canvas coordinates
const drawnLines = [
  "left-[76px] top-0 h-[480px] w-px bg-[#00d800]",
  "left-[124px] top-0 h-[480px] w-[1px] bg-white",
  "left-[131px] top-0 h-full w-px bg-[#1f8a10]",
  "left-[139px] top-0 h-[480px] w-[15px] bg-[#00ff00]",
  "left-[241px] top-0 h-full w-px bg-[#1f8a10]",
  "left-[268px] top-[4px] h-[26px] w-px bg-[#777]",
  "left-[268px] top-[35px] h-[60px] w-px bg-[#777]",
  "left-[286px] top-[5px] h-[24px] w-px bg-[#777]",
  "left-[286px] top-[35px] h-[60px] w-px bg-[#777]",
  "left-[268px] top-[560px] h-[80px] w-px bg-[#1020e0]",
  "left-[268px] top-[640px] h-[30px] w-px bg-[#1020e0]",
  "left-[286px] top-[560px] h-[110px] w-px bg-[#1020e0]",
  "left-[330px] top-0 h-full w-[30px] bg-[#0080ff]",
  "left-[345px] top-0 h-[615px] w-px bg-[#c080e8]",
  "left-[360px] top-0 h-full w-px bg-[#c080e8]",
  "left-[352px] top-0 h-[60px] w-px bg-[#20e0e0]",
  "left-[350px] top-[618px] h-[52px] w-[4px] border-x border-[#30f0f0]",
  "left-[331px] top-[618px] h-px w-[14px] bg-[#e070e0]",
  "left-[345px] top-[618px] h-px w-[15px] bg-[#30f0f0]",
  "left-0 top-[618px] h-px w-[8px] bg-[#00e000]",
  "left-0 top-[1px] h-px w-[380px] bg-[#1f8a10]",
  "left-[555px] top-0 h-full w-[19px] bg-[#00ff00]",
  "left-[588px] top-0 h-full w-px bg-[#8a1010]",
  "left-[756px] top-0 h-full w-[19px] bg-[#00ff00]",
  "left-[766px] top-0 h-full w-px bg-[#181818]",
  "left-[960px] top-0 h-full w-[26px] bg-[#00ff00]",
  "left-[971px] top-0 h-full w-px bg-[#707070]",
  "left-[640px] top-[195px] h-[19px] w-[370px] bg-[#00ff00]",
  "left-[640px] top-[205px] h-px w-[370px] bg-[#108a10]",
];

function AxisCircle({ pos, label }: { pos: string; label?: string }) {
  return (
    <div className={clsx("absolute flex h-[26px] w-[26px] items-center justify-center", pos)}>
      <svg viewBox="0 0 26 26" className="absolute inset-0 h-[26px] w-[26px]">
        <path d="m8 1 10 0 7 7 0 10-7 7-10 0-7-7 0-10z" fill="none" stroke="#0a8a0a" />
      </svg>
      {label && <span className="relative text-[16px] font-bold leading-none text-[#d020d0]">{label}</span>}
    </div>
  );
}

function Canvas() {
  return (
    <div className="relative min-w-0 flex-1 overflow-hidden bg-black">
      {drawnLines.map((c) => (
        <div key={c} className={clsx("absolute", c)} />
      ))}
      <AxisCircle pos="left-[339px] top-0" />
      <AxisCircle pos="left-[339px] top-[644px]" />
      <AxisCircle pos="left-[959px] top-0" label="2" />
      <AxisCircle pos="left-[959px] top-[644px]" label="2" />
      <div className="absolute left-[943px] top-[178px] h-[56px] w-[57px] bg-[#9400f0]">
        <div className="ml-[28px] h-full w-px bg-[#c060ff]" />
      </div>
      <AxisCircle pos="left-[987px] top-[192px]" />
      <span className="absolute left-[992px] top-[198px] text-[12px] leading-none text-[#20e020]">D</span>
      <svg viewBox="0 0 90 70" className="absolute left-[40px] top-[560px] h-[70px] w-[90px]">
        <path d="M15 55V14" stroke="#00ff00" strokeWidth="3.500" />
        <path d="m15 6 4 10h-8z" fill="#00ff00" />
        <path d="M15 55h35" stroke="#ff0000" strokeWidth="3.500" />
        <path d="m65 55-12 4v-8z" fill="#ff0000" />
        <circle cx="15" cy="55" r="4" fill="#0a70e8" />
        <text x="24" y="20" fill="#00e000" fontSize="14" fontFamily="Liberation Sans">Y</text>
        <text x="51" y="45" fill="#ff2020" fontSize="14" fontFamily="Liberation Sans">X</text>
        <text x="1" y="62" fill="#0a90ff" fontSize="15" fontFamily="Liberation Sans">Z</text>
      </svg>
    </div>
  );
}

function SideTools() {
  return (
    <div className="flex w-[30px] shrink-0 flex-col items-center bg-[#f0f0f0] pl-[3px]">
      <div className="mt-[9px]"><Icon n="brush" /></div>
      <div className="mt-[3px] h-px w-[18px] bg-[#888]" />
      <div className="mt-[9px]"><Icon n="grips" /></div>
      <div className="mt-[520px] h-px w-[18px] bg-[#888]" />
      <div className="mt-[3px]"><Icon n="brush" /></div>
      <div className="mt-[4px] text-[#777] [writing-mode:vertical-rl]">设置夹点</div>
      <div className="mb-[2px] mt-auto flex flex-col gap-[1px] leading-none">
        <ChevV />
        <ChevV />
      </div>
    </div>
  );
}

function NumBox({ v, w }: { v: string; w: string }) {
  return (
    <div className="flex h-[22px] shrink-0 items-center">
      <span className={clsx("flex h-[20px] items-center justify-end bg-white pr-[2px] text-[#8a8a8a]", w)}>{v}</span>
      <span className="ml-[2px] flex h-[20px] w-[13px] flex-col items-center justify-center gap-[3px] bg-[#e9e9e9]">
        <span className="h-0 w-0 border-x-[3px] border-b-[4px] border-x-transparent border-b-[#777]" />
        <span className="h-0 w-0 border-x-[3px] border-t-[4px] border-x-transparent border-t-[#777]" />
      </span>
    </div>
  );
}

function BottomBar() {
  return (
    <div className="flex h-[30px] shrink-0 items-center bg-[#f0f0f0] text-[#8a8a8a]">
      <div className="flex h-full w-[430px] shrink-0 items-center border-b border-r border-[#b8b8b8]">
        <Grip w="w-[13px]" />
        <div className="flex h-[22px] w-[55px] shrink-0 items-center justify-between bg-[#f6f6f6] pl-[2px]">
          不偏移
          <span className="flex h-full w-[14px] items-center justify-center bg-[#c4c4c4]"><ChevDown /></span>
        </div>
        <Sep w="w-[9px]" />
        <span className="w-[28px] shrink-0 text-[13px] tracking-[1px]">X =</span>
        <NumBox v="0" w="w-[41px]" />
        <span className="ml-[3px] w-[26px] shrink-0 text-[13px]">mm</span>
        <span className="w-[28px] shrink-0 text-[13px] tracking-[1px]">Y =</span>
        <NumBox v="0" w="w-[41px]" />
        <span className="ml-[3px] w-[24px] shrink-0 text-[13px]">mm</span>
        <Sep w="w-[3px]" />
        <span className="ml-[1px] h-[14px] w-[14px] shrink-0 border border-[#333] bg-white" />
        <span className="ml-[6px] w-[30px] shrink-0 text-[#444]">旋转</span>
        <NumBox v="0.000" w="w-[50px]" />
        <span className="ml-[3px] text-[10px]">°</span>
      </div>
      <div className="flex h-full items-center text-black">
        <div className="w-[50px]" />
        <Grip w="w-[6px]" />
        <Tool w="w-[51px]" i="ortho" label="正交" />
        <Tool w="w-[52px]" i="cross" label="交点" />
        <Tool w="w-[51px]" i="perp" label="垂点" on />
        <Tool w="w-[50px]" i="mid" label="中点" on />
        <Tool w="w-[52px]" i="vertex" label="顶点" />
        <Tool w="w-[50px]" i="coord" label="坐标" />
      </div>
    </div>
  );
}

function DRadio({ on, label, w }: { on?: boolean; label: string; w: string }) {
  return (
    <div className={clsx("flex shrink-0 items-center whitespace-nowrap", w)}>
      <span className="flex h-[13px] w-[13px] shrink-0 items-center justify-center rounded-full border border-[#333] bg-white">
        {on && <span className="h-[7px] w-[7px] rounded-full bg-[#111]" />}
      </span>
      <span className="ml-[1px] pl-[6px]">{label}</span>
    </div>
  );
}

function Check({ off }: { off?: boolean }) {
  return (
    <svg viewBox="0 0 13 13" className="h-[13px] w-[13px] shrink-0">
      <rect x=".5" y=".5" width="12" height="12" fill={off ? "#eaeaea" : "#fff"} stroke={off ? "#a8a8a8" : "#333"} />
      <path d="m3 6.500 2.500 3L10 3.500" fill="none" stroke={off ? "#a8a8a8" : "#222"} strokeWidth="1.300" />
    </svg>
  );
}

const heads = ["体积(m3)", "模板面积(m2)", "超高模板面积(m2)", "脚手架面积(m2)", "截面周长(m)", "梁净长(m)", "轴线长度(m)", "砖胎膜"];
const values = ["13.344", "77.664", "310.656", "0", "2.4", "41.7", "44.925", ""];

function QtyTable() {
  const hd = "border border-[#b8c8dc] bg-[#739ecf] px-0 font-normal overflow-hidden whitespace-pre";
  const num = "border-b border-r border-[#000080] pr-[3px] text-right whitespace-pre";
  const rn = "border border-[#b8c8dc] bg-[#739ecf] text-center font-normal";
  return (
    <table className="w-[716px] table-fixed border-collapse">
      <colgroup>
        <col className="w-[36px]" /><col className="w-[53px]" /><col className="w-[53px]" /><col className="w-[65px]" />
        <col className="w-[77px]" /><col className="w-[101px]" /><col className="w-[88px]" /><col className="w-[72px]" />
        <col className="w-[65px]" /><col className="w-[71px]" /><col className="w-[35px]" />
      </colgroup>
      <tbody>
        <tr className="h-[19px]">
          <th className={hd} />
          <th colSpan={2} className={clsx(hd, "text-center text-[#b03ea8]")}>分类条件</th>
          <th colSpan={8} className={clsx(hd, "text-right text-white")}>工程量</th>
        </tr>
        <tr className="h-[19px]">
          <th className={hd} />
          <th className={clsx(hd, "text-center text-[#b03ea8]")}>楼层</th>
          <th className={clsx(hd, "text-center text-white")}>名称</th>
          {heads.map((h) => (
            <th key={h} className={clsx(hd, "pl-[2px] text-left text-white")}><Sim t={h} /></th>
          ))}
        </tr>
        <tr className="h-[19px] bg-white">
          <th className={clsx(rn, "text-[#660066]")}><Sim t="1" /></th>
          <td rowSpan={2} className="border-b border-r border-[#000080] bg-[#d5e8f8] text-center">首层</td>
          <td className="border-b border-r border-[#000080] text-center"><Sim t="KL1(5)" /></td>
          {values.map((v, i) => (
            <td key={i} className={num}><Sim t={v} /></td>
          ))}
        </tr>
        <tr className="h-[19px] bg-[#ffffe0]">
          <th className={rn}><Sim t="2" /></th>
          <td className="border-b border-r border-[#000080] bg-[#a8cbf0] text-center">小计</td>
          {values.map((v, i) => (
            <td key={i} className={num}><Sim t={v} /></td>
          ))}
        </tr>
        <tr className="h-[19px] bg-[#7fffff]">
          <th className={rn}><Sim t="3" /></th>
          <td colSpan={2} className="border-b border-r border-[#000080] text-center">总计</td>
          {values.map((v, i) => (
            <td key={i} className={num}><Sim t={v} /></td>
          ))}
        </tr>
      </tbody>
    </table>
  );
}

function DlgButton({ t, w }: { t: string; w: string }) {
  return <div className={clsx("flex h-[22px] shrink-0 items-center justify-center whitespace-nowrap border border-[#adadad] bg-[#e1e1e1] pb-[1px]", w)}>{t}</div>;
}

function Dialog() {
  return (
    <div className="absolute left-[355px] top-[117px] z-10 flex h-[503px] w-[731px] flex-col border border-[#8a8a8a] bg-[#f0f0f0] shadow-[0_2px_8px_rgba(0,0,0,.4)]">
      <div className="flex h-[28px] shrink-0 items-center bg-white">
        <svg viewBox="0 0 16 16" className="ml-[6px] h-4 w-4">
          <rect width="16" height="16" rx="3" fill="#2db66b" />
          <path d="M4.500 3v10M5 8h5.500M10.500 6v5" stroke="#fff" strokeWidth="1.800" fill="none" />
        </svg>
        <span className="ml-[5px] pb-[3px] text-[#888]">查看构件图元工程量</span>
        <div className="ml-auto flex items-center text-[#888]">
          <svg viewBox="0 0 46 20" className="h-5 w-[46px]"><path d="M18 10h10" stroke="#999" /></svg>
          <svg viewBox="0 0 46 20" className="h-5 w-[46px]"><rect x="18.500" y="5.500" width="10" height="10" fill="none" stroke="#999" /></svg>
          <svg viewBox="0 0 46 20" className="h-5 w-[46px]"><path d="m18 5 10 10m0-10L18 15" stroke="#999" /></svg>
        </div>
      </div>
      <div className="mt-[3px] flex h-[20px] shrink-0 items-end">
        <div className="z-10 flex h-[21px] w-[75px] translate-y-px items-center justify-center border-x border-t border-[#c0c0c0] bg-white pb-[3px]">构件工程量</div>
        <div className="ml-px flex h-[18px] w-[67px] items-center justify-center border-x border-t border-[#c0c0c0] bg-[#ececec] pb-[1px]">做法工程量</div>
      </div>
      <div className="flex min-h-0 flex-1 flex-col border border-[#c0c0c0] bg-white">
        <div className="flex h-[28px] shrink-0 items-center bg-[#f0f0f0] pl-[1px]">
          <DRadio on label="清单工程量" w="w-[82px]" />
          <DRadio label="定额工程量" w="w-[81px]" />
          <Sep w="w-[15px]" />
          <Check />
          <span className="ml-[7px] w-[126px] whitespace-nowrap">显示房间、组合构件量</span>
          <Sep w="w-[6px]" />
          <span className="whitespace-nowrap text-[12px] text-[#0a0a40]">过滤构件类型:</span>
          <div className="ml-[11px] flex h-[24px] w-[126px] shrink-0 items-center justify-between border border-[#a0a0a0] bg-white pl-[1px]">
            梁
            <span className="flex h-full w-[13px] items-center justify-center bg-[#d4d4d4]"><ChevDown /></span>
          </div>
          <Sep w="w-[6px]" />
          <Check off />
          <span className="ml-[7px] whitespace-nowrap text-[#a8a8a8]">只显示标准层单层量</span>
        </div>
        <div className="mx-[4px] flex min-h-0 flex-1 flex-col border border-[#b8b8b8] bg-white">
          <div className="min-h-0 flex-1 overflow-hidden"><QtyTable /></div>
          <div className="flex h-[15px] shrink-0 items-center bg-[#f0f0f0]">
            <span className="flex w-[17px] justify-center"><ChevH /></span>
            <span className="h-full w-[298px] bg-[#c8c8c8]" />
            <span className="ml-auto flex w-[17px] justify-center"><ChevH right /></span>
          </div>
        </div>
        <div className="h-[3px] shrink-0 bg-white" />
      </div>
      <div className="flex h-[44px] shrink-0 items-center pl-[4px]">
        <DlgButton t="设置分类及工程量(S)" w="w-[129px]" />
        <span className="ml-[20px]"><DlgButton t="导出到Excel" w="w-[82px]" /></span>
        <span className="ml-[17px]"><DlgButton t="导出到已有Excel" w="w-[104px]" /></span>
        <span className="ml-[293px] flex h-[22px] w-[73px] items-center justify-center border-2 border-[#0078d7] bg-[#e1e1e1]">退出</span>
      </div>
    </div>
  );
}

function StatusCell({ w, t }: { w: string; t?: string }) {
  return (
    <div className={clsx("flex h-full shrink-0 items-center overflow-hidden whitespace-pre border-r border-[#c8c8c8] pl-[1px]", w)}>
      {t && <Sim t={t} />}
    </div>
  );
}

function StatusBar() {
  return (
    <div className="flex h-[22px] shrink-0 items-center border-t border-[#d0d0d0] bg-[#f0f0f0]">
      <StatusCell w="w-[150px]" t="X=-284 Y=25602" />
      <StatusCell w="w-[80px]" t="层高:7.8m" />
      <StatusCell w="w-[130px]" t="建筑底标高:0m" />
      <StatusCell w="w-[50px]" t="1(1)" />
      <StatusCell w="w-[250px]" />
      <StatusCell w="w-[559px]" t="按鼠标左键选择图元，或拉框选择，按右键中止或ESC键取消" />
      <StatusCell w="w-[70px]" t="343.4FPS" />
    </div>
  );
}

function TaskItem({ children, w, mark, active }: { children: ReactNode; w: string; mark?: boolean; active?: boolean }) {
  return (
    <div className={clsx("relative flex h-full shrink-0 items-center justify-center", w, active && "bg-[#6a6a6a]")}>
      {children}
      {mark && <span className={clsx("absolute bottom-0 h-[2px] bg-[#6db2ea]", active ? "inset-x-0" : "inset-x-[4px]")} />}
    </div>
  );
}

function Taskbar() {
  return (
    <div className="flex h-[40px] shrink-0 items-center bg-[#454545] text-white">
      <TaskItem w="w-[48px]">
        <svg viewBox="0 0 16 16" className="h-4 w-4"><path d="M0 2.200 6.500 1.300V7.500H0zM7.500 1.100 16 0v7.500H7.500zM0 8.500h6.500v6.200L0 13.800zM7.500 8.500H16V16l-8.500-1.100z" fill="#fff" /></svg>
      </TaskItem>
      <TaskItem w="w-[48px]">
        <svg viewBox="0 0 16 16" className="h-4 w-4"><circle cx="10" cy="6" r="5" fill="none" stroke="#fff" strokeWidth="1.200" /><path d="m6.500 9.500-6 6" stroke="#fff" strokeWidth="1.200" /></svg>
      </TaskItem>
      <TaskItem w="w-[48px]">
        <svg viewBox="0 0 18 16" className="h-4 w-[18px]"><path d="M2 3.500h10v9H2zM0 1h14M0 15h14M16 3h2v2h-2zM16 7h2v2h-2zM16 11h2v2h-2z" fill="none" stroke="#fff" /></svg>
      </TaskItem>
      <div className="w-[3px] shrink-0" />
      <TaskItem w="w-[48px]" mark>
        <div className="flex h-[25px] w-6 flex-col items-center overflow-hidden rounded-[3px] bg-white">
          <span className="h-[14px] text-[9px] font-bold leading-[14px] text-[#d02020] font-['Liberation_Sans',sans-serif]">NBG</span>
          <span className="flex h-full w-full items-center justify-center bg-[#1a2a4a] text-[6px] leading-none text-white">计划</span>
        </div>
      </TaskItem>
      <TaskItem w="w-[49px]" mark>
        <svg viewBox="0 0 24 24" className="h-6 w-6">
          <defs>
            <linearGradient id="edgeA" x1="0" x2="1" y1="1" y2="0"><stop offset="0" stopColor="#0c72d0" /><stop offset="1" stopColor="#32d67a" /></linearGradient>
          </defs>
          <circle cx="12" cy="12" r="12" fill="url(#edgeA)" />
          <path d="M5 19c-3-5 1-11 7-11 4 0 6 3 6 5h-7c-1 3 2 6 6 6-4 3-9 3-12 0z" fill="#0a4a90" />
        </svg>
      </TaskItem>
      <TaskItem w="w-[48px]" mark>
        <svg viewBox="0 0 24 24" className="h-6 w-6"><rect width="24" height="24" rx="5" fill="#1690f0" /><path d="m8 4 9 8-7 9 2-7-5-1z" fill="#fff" /></svg>
      </TaskItem>
      <TaskItem w="w-[49px]" mark>
        <div className="flex h-6 w-6 items-center justify-center rounded-[2px] border border-[#8aa] bg-[#2a5a9a] text-[10px] leading-none text-[#cfe] font-['Liberation_Sans',sans-serif]">CAD</div>
      </TaskItem>
      <TaskItem w="w-[49px]" mark>
        <div className="flex h-6 w-6 items-center justify-center rounded-[5px] bg-[#1a7af0] text-[15px] font-bold leading-none font-['Liberation_Sans',sans-serif]">W</div>
      </TaskItem>
      <TaskItem w="w-[51px]" mark>
        <div className="relative h-6 w-5">
          <span className="absolute left-0 top-[12px] h-[12px] w-[9px] bg-[#ddd]" />
          <span className="absolute left-[5px] top-0 text-[20px] font-bold leading-none text-[#f6e000] font-['Liberation_Sans',sans-serif]">?</span>
        </div>
      </TaskItem>
      <TaskItem w="w-[47px]" mark active>
        <svg viewBox="0 0 24 24" className="h-6 w-6">
          <rect width="24" height="24" rx="5" fill="#2db66b" />
          <path d="M7 5v14M7.500 12H17M17 9v6" stroke="#fff" strokeWidth="2.400" fill="none" />
        </svg>
      </TaskItem>
      <TaskItem w="w-[50px]" mark>
        <svg viewBox="0 0 24 24" className="h-6 w-6"><path d="M2 2h8l2 3h10v17H2z" fill="#f5c33a" /><path d="M2 8h20v14H2z" fill="#ffd866" /><path d="M8 14h8v8H8z" fill="#2a8ad8" /></svg>
      </TaskItem>
      <TaskItem w="w-[48px]" mark>
        <svg viewBox="0 0 24 24" className="h-6 w-6"><rect width="24" height="24" rx="6" fill="#f5c518" /><circle cx="12" cy="11" r="6" fill="none" stroke="#222" strokeWidth="2.500" /><circle cx="12" cy="11" r="2" fill="#222" /><path d="M8 20h8" stroke="#222" strokeWidth="2.500" /></svg>
      </TaskItem>
      <div className="ml-auto flex h-full items-center">
        <svg viewBox="0 0 14 8" className="h-2 w-[14px]"><path d="m1 7 6-6 6 6" fill="none" stroke="#fff" /></svg>
        <svg viewBox="0 0 16 16" className="ml-[7px] h-4 w-4"><path d="M.5 1.500h5v5h-5zM5.500 3.500h10v10h-10zM3 6.500v6h2.500M6 14.500h9" fill="none" stroke="#fff" /></svg>
        <svg viewBox="0 0 16 16" className="ml-[8px] h-4 w-4"><path d="M1 6h3l4-4v12l-4-4H1z" fill="none" stroke="#fff" /><path d="M10.500 5a4 4 0 0 1 0 6M12.500 3a7 7 0 0 1 0 10" fill="none" stroke="#fff" /></svg>
        <span className="ml-[7px] w-[16px] text-[15px] leading-[18px]">中</span>
        <div className="ml-[9px] flex w-[68px] flex-col items-center text-[12px] leading-[18px] font-['Noto_Sans',sans-serif]">
          <span>17:19</span>
          <span>2023-07-10</span>
        </div>
        <div className="relative ml-[16px] h-5 w-6">
          <svg viewBox="0 0 16 15" className="ml-[3px] h-[15px] w-4"><path d="M0 0h16v10h-9l-3 3v-3H0z" fill="#fff" /><path d="M3 3h10M3 6h10" stroke="#666" /></svg>
          <span className="absolute left-[9px] top-[7px] flex h-[15px] w-[15px] items-center justify-center rounded-full border border-[#aaa] bg-[#333] text-[10px] leading-none">1</span>
        </div>
        <div className="ml-[9px] h-full w-px bg-[#777]" />
        <div className="w-[10px]" />
      </div>
    </div>
  );
}

export default function App() {
  return (
    <div className="relative flex h-[900px] w-[1440px] flex-col overflow-hidden bg-[#f0f0f0] text-[12px] leading-[15px] text-black font-['Noto_Sans_CJK_SC','Liberation_Sans',sans-serif]">
      <TitleBar />
      <MenuBar />
      <Toolbar1 />
      <div className="relative flex min-h-0 flex-1">
        <LeftNav />
        <CompPanel />
        <div className="flex min-w-0 flex-1 flex-col">
          <Toolbars />
          <div className="flex min-h-0 flex-1">
            <SideTools />
            <Canvas />
          </div>
          <BottomBar />
        </div>
        <Dialog />
        <div className="pointer-events-none absolute left-[1175px] top-[696px] z-20 flex flex-col gap-[4px] whitespace-nowrap text-[#9a9a9a]/70 font-['Noto_Sans','Noto_Sans_CJK_SC',sans-serif]">
          <span className="text-[20px] leading-[24px]">激活 Windows</span>
          <span className="text-[14.500px] leading-[16px]">转到“设置”以激活 Windows。</span>
        </div>
      </div>
      <StatusBar />
      <Taskbar />
    </div>
  );
}
